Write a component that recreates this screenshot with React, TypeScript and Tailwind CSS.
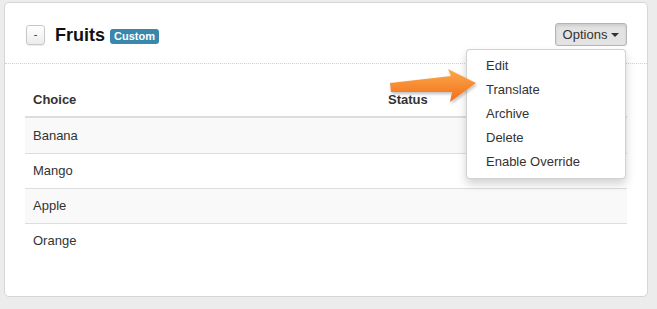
const rows = ['Banana', 'Mango', 'Apple', 'Orange']
const menu = ['Edit', 'Translate', 'Archive', 'Delete', 'Enable Override']

export default function App() {
  return (
    <div className="relative w-[657px] h-[309px] bg-[#ececec] pt-[2px] pl-[4px] font-['Liberation_Sans',Arial,sans-serif] text-[13px] text-[#333]">
      {/* Panel */}
      <div className="w-[644px] h-[295px] bg-white border border-[#d6d6d6] rounded-[5px]">
        {/* Header */}
        <div className="h-[61px] border-b border-dotted border-[#cfcfcf] flex items-center justify-between pl-[21px] pr-[20px] pt-[3px]">
          <div className="flex items-center">
            <button className="w-[19px] h-[20px] rounded-[3px] border border-[#c8c8c8] bg-gradient-to-b from-white to-[#ececec] text-[11px] leading-none text-[#333] flex items-center justify-center shadow-[0_1px_1px_rgba(0,0,0,0.08)]">
              -
            </button>
            <h2 className="ml-[10px] text-[18px] font-bold text-[#111] leading-none">Fruits</h2>
            <span className="ml-[5px] mt-[3px] h-[15px] px-[4px] rounded-[3px] bg-[#3a87ad] text-white text-[11px] font-bold leading-[15px]">
              Custom
            </span>
          </div>
          <button className="w-[72px] h-[23px] rounded-[3px] border border-[#b5b5b5] bg-[#e3e3e3] shadow-[inset_0_2px_3px_rgba(0,0,0,0.1)] flex items-center justify-center gap-[4px] text-[13px] text-[#333]">
            Options
            <span className="w-0 h-0 border-l-[4px] border-r-[4px] border-t-[4px] border-l-transparent border-r-transparent border-t-[#333]" />
          </button>
        </div>

        {/* Body */}
        <div className="px-[20px] pt-[20px]">
          <div className="grid grid-cols-[355px_1fr] h-[34px] items-center border-b-2 border-[#ddd] font-bold">
            <div className="pl-[8px]">Choice</div>
            <div className="pl-[8px]">Status</div>
          </div>
          {rows.map((r, i) => (
            <div
              key={r}
              className={`grid grid-cols-[355px_1fr] h-[35px] items-center ${i > 0 ? 'border-t border-[#ddd]' : ''} ${i % 2 === 0 ? 'bg-[#f9f9f9]' : ''}`}
            >
              <div className="pl-[8px]">{r}</div>
              <div />
            </div>
          ))}
        </div>
      </div>

      {/* Dropdown menu */}
      <div className="absolute left-[466px] top-[49px] w-[160px] h-[130px] bg-white border border-[rgba(0,0,0,0.18)] rounded-[4px] shadow-[0_5px_10px_rgba(0,0,0,0.18)] py-[4px]">
        {menu.map((m) => (
          <div key={m} className="h-[24px] flex items-center pl-[19px] text-[#333]">
            {m}
          </div>
        ))}
      </div>

      {/* Callout arrow */}
      <svg className="absolute left-[386px] top-[64px]" width="96" height="44" viewBox="0 0 96 44">
        <defs>
          <linearGradient id="ag" x1="0" y1="0" x2="0" y2="1">
            <stop offset="0" stopColor="#fbab4a" />
            <stop offset="1" stopColor="#f26d1c" />
          </linearGradient>
          <filter id="sh" x="-10%" y="-20%" width="130%" height="160%">
            <feDropShadow dx="1" dy="2" stdDeviation="1.5" floodColor="#000" floodOpacity="0.25" />
          </filter>
        </defs>
        <polygon
          points="4,19 65,12 62,5 90,19 64,38 66,28 5,28"
          fill="url(#ag)"
          filter="url(#sh)"
        />
      </svg>
    </div>
  )
}
